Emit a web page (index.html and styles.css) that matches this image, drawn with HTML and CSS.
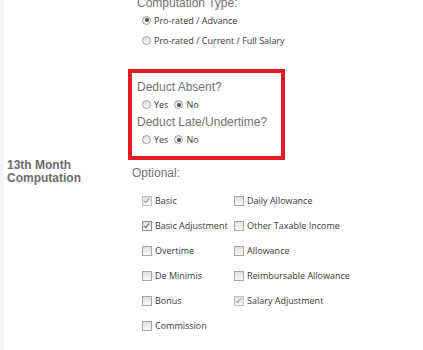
FILE: index.html
```html
<!DOCTYPE html>
<html lang="en">
<head>
    <meta charset="UTF-8">
    <meta name="viewport" content="width=device-width, initial-scale=1.0">
    <title>13th Month Computation</title>
    <link rel="stylesheet" href="styles.css">
</head>
<body>
    <div class="form">
        <div class="row row-top">
            <div class="row-label"></div>
            <div class="row-field">
                <div class="group">
                    <div class="group-title">Computation Type:</div>
                    <label class="option stacked"><span class="radio on"></span>Pro-rated / Advance</label>
                    <label class="option stacked"><span class="radio"></span>Pro-rated / Current / Full Salary</label>
                </div>
                <div class="deduct-box">
                    <div class="group-title">Deduct Absent?</div>
                    <div class="inline-options">
                        <label class="option"><span class="radio"></span>Yes</label>
                        <label class="option"><span class="radio on"></span>No</label>
                    </div>
                    <div class="group-title">Deduct Late/Undertime?</div>
                    <div class="inline-options">
                        <label class="option"><span class="radio"></span>Yes</label>
                        <label class="option"><span class="radio on"></span>No</label>
                    </div>
                </div>
            </div>
        </div>
        <div class="row">
            <div class="row-label">13th Month Computation</div>
            <div class="row-field">
                <div class="group-title optional-title">Optional:</div>
                <div class="check-grid">
                    <label class="option"><span class="check on disabled"></span>Basic</label>
                    <label class="option"><span class="check on"></span>Basic Adjustment</label>
                    <label class="option"><span class="check"></span>Overtime</label>
                    <label class="option"><span class="check"></span>De Minimis</label>
                    <label class="option"><span class="check"></span>Bonus</label>
                    <label class="option"><span class="check"></span>Commission</label>
                    <label class="option"><span class="check"></span>Daily Allowance</label>
                    <label class="option"><span class="check"></span>Other Taxable Income</label>
                    <label class="option"><span class="check"></span>Allowance</label>
                    <label class="option"><span class="check"></span>Reimbursable Allowance</label>
                    <label class="option"><span class="check on disabled"></span>Salary Adjustment</label>
                </div>
            </div>
        </div>
    </div>
</body>
</html>
```

FILE: styles.css
```css
body {
    margin: 0;
    background: #fff;
    border-left: 4px solid #f3f3f3;
    min-height: 100vh;
    box-sizing: border-box;
    overflow: hidden;
    font-family: "Liberation Sans", Arial, sans-serif;
}
.form {
    display: flex;
    flex-direction: column;
}
.row {
    display: grid;
    grid-template-columns: 128px 1fr;
}
.row-top {
    margin-top: -4px;
}
.row-label {
    padding-left: 3px;
    margin-top: -1px;
    font-size: 12px;
    line-height: 13px;
    font-weight: bold;
    color: #6c6c6c;
}
.group-title {
    font-size: 12px;
    line-height: 14px;
    color: #727272;
}
.group {
    padding-left: 5px;
}
.option {
    display: flex;
    align-items: center;
    font-family: "Open Sans", "Noto Sans", sans-serif;
    font-size: 9px;
    color: #3a3a3a;
    white-space: nowrap;
}
.option.stacked {
    height: 20px;
    padding-left: 5px;
}
.radio {
    width: 9px;
    height: 9px;
    margin-right: 3px;
    border-radius: 50%;
    border: 1px solid #a2a2a2;
    background: linear-gradient(#dedede, #fafafa);
    box-sizing: border-box;
    display: flex;
    align-items: center;
    justify-content: center;
    flex-shrink: 0;
}
.radio.on::after {
    content: "";
    width: 4px;
    height: 4px;
    border-radius: 50%;
    background: #505050;
}
.deduct-box {
    margin-top: 19px;
    margin-left: -4px;
    width: 157px;
    box-sizing: border-box;
    border: 4px solid #e31b23;
    padding: 7px 0 6px 5px;
}
.inline-options {
    display: flex;
    gap: 6px;
    height: 21px;
    padding-left: 5px;
}
.optional-title {
    margin-top: 6px;
}
.check-grid {
    display: grid;
    grid-template-columns: 92px auto;
    grid-template-rows: repeat(6, 25px);
    grid-auto-flow: column;
    margin-top: 8px;
    padding-left: 10px;
}
.check {
    position: relative;
    width: 10px;
    height: 10px;
    margin-right: 3px;
    border: 1px solid #a8a8a8;
    background: linear-gradient(#e0e0e0, #f8f8f8);
    box-sizing: border-box;
    flex-shrink: 0;
}
.check.on {
    border-color: #8e8e8e;
}
.check.on::after {
    content: "";
    position: absolute;
    left: 2px;
    top: 0;
    width: 2px;
    height: 5px;
    border: solid #5a5a5a;
    border-width: 0 1.5px 1.5px 0;
    transform: rotate(40deg);
}
.check.disabled {
    border-color: #c0c0c0;
}
.check.disabled::after {
    border-color: #a0a0a0;
}
```
